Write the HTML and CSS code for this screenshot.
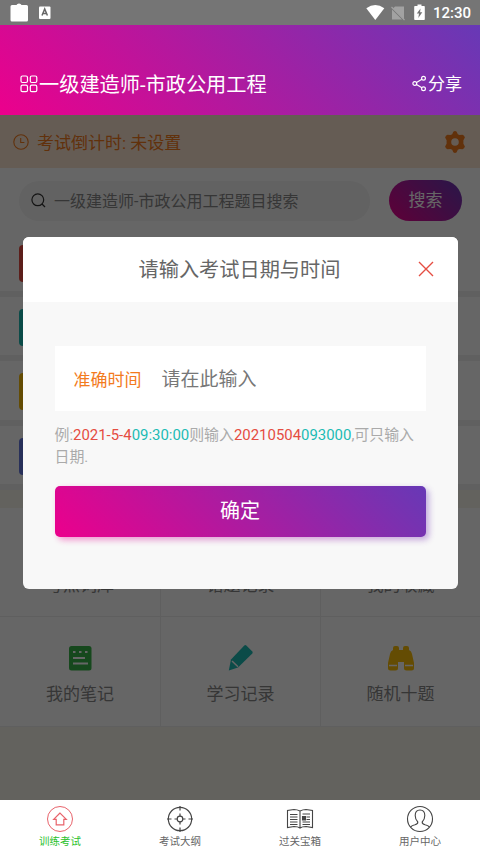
FILE: index.html
```
<!DOCTYPE html>
<html lang="zh-CN">
<head>
<meta charset="utf-8">
<title>一级建造师-市政公用工程</title>
<link rel="stylesheet" href="styles.css">
</head>
<body>
<div class="app">
  <div class="status">
    <svg class="status-left" width="60" height="25" viewBox="0 0 60 25">
      <path d="M12 5h4.500q.5-1.500 2.500-1.500t2.500 1.500H26.500q1.500 0 1.500 1.500v13.500q0 1.500-1.500 1.500H12q-1.500 0-1.500-1.500V6.500Q10.500 5 12 5z" fill="#fff"/>
      <rect x="39" y="6.500" width="11.500" height="12.500" rx="1" fill="#fff"/>
      <path d="M42 15.500l2.700-6.500 2.700 6.500M43 13.500h3.400" fill="none" stroke="#666" stroke-width="1.500"/>
    </svg>
    <svg class="status-right" width="66" height="25" viewBox="0 0 66 25">
      <path d="M0.300 8.200Q9.300 1.800 18.300 8.200L9.300 20z" fill="#fff"/>
      <path d="M29 6.500h9v12.700L27 8.500zM26 9.500l10 10H26z" fill="#a2a2a2"/>
      <path d="M25.500 7l13 13" stroke="#a2a2a2" stroke-width="1.200"/>
      <path d="M49 6h2.500V4.500h4V6H58q.8 0 .8 .8v12.400q0 .8-.8 .8h-9q-.8 0-.8-.8V6.800q0-.8 .8-.8z" fill="#fff"/>
      <path d="M54.500 8.500l-3.700 5h2.200l-.7 4.500 4-5.700h-2.200z" fill="#757575"/>
    </svg>
    <span class="clock">12:30</span>
  </div>
  <header class="header">
    <svg width="18" height="18" viewBox="0 0 18 18" fill="none" stroke="#fff" stroke-width="1.200">
      <rect x="1" y="1" width="6.500" height="6.500" rx="1.500"/><rect x="10.300" y="1" width="6.500" height="6.500" rx="1.500"/>
      <rect x="1" y="10.200" width="6.500" height="6.500" rx="1.500"/><rect x="10.300" y="10.200" width="6.500" height="6.500" rx="1.500"/>
    </svg>
    <h1 class="title">一级建造师-市政公用工程</h1>
    <svg class="share-icon" width="15" height="17" viewBox="0 0 15 17" fill="none" stroke="#fff" stroke-width="1.200">
      <circle cx="2.800" cy="8.500" r="1.900"/><circle cx="11.500" cy="3.300" r="1.900"/><circle cx="11.500" cy="13.700" r="1.900"/>
      <path d="M4.500 7.500l5.400-3.200M4.500 9.500l5.400 3.200"/>
    </svg>
    <span class="share">分享</span>
  </header>
  <main class="page">
    <div class="notice">
      <svg width="16" height="16" viewBox="0 0 16 16" fill="none" stroke="#f37b1d" stroke-width="1.100"><circle cx="8" cy="8" r="7.200"/><path d="M7.700 4v4.500h3.700"/></svg>
      <span class="notice-text">考试倒计时: 未设置</span>
      <svg width="22" height="22" viewBox="0 0 22 22"><path fill="#f37b1d" fill-rule="evenodd" d="M9.300.700Q11-.500 12.700.700L13.800 3.200 15.500 4.100 18.500 3.700Q20.400 4.200 20.900 6.500L19.400 9.300V12.700L20.900 15.500Q20.400 17.800 18.500 18.300L15.500 17.900 13.800 18.800 12.700 21.300Q11 22.500 9.300 21.300L8.200 18.800 6.500 17.900 3.500 18.300Q1.600 17.800 1.100 15.500L2.600 12.700V9.300L1.100 6.500Q1.600 4.200 3.500 3.700L6.500 4.100 8.200 3.200zM11 7.200a3.800 3.800 0 1 0 0 7.600a3.800 3.800 0 0 0 0-7.600z"/></svg>
    </div>
    <div class="search">
      <div class="search-box">
        <svg width="15" height="15" viewBox="0 0 15 15" fill="none" stroke="#333" stroke-width="1.200"><circle cx="6.800" cy="6.800" r="5.900"/><path d="M11 11l3 3"/></svg>
        <span class="search-text">一级建造师-市政公用工程题目搜索</span>
      </div>
      <div class="search-btn">搜索</div>
    </div>
    <div class="row"><i class="tile red"></i></div>
    <div class="row"><i class="tile cyan"></i></div>
    <div class="row"><i class="tile yellow"></i></div>
    <div class="row"><i class="tile indigo"></i></div>
    <div class="grid">
      <div class="cell"><span class="pic"></span><span>考点词库</span></div>
      <div class="cell"><span class="pic"></span><span>错题记录</span></div>
      <div class="cell"><span class="pic"></span><span>我的收藏</span></div>
      <div class="cell">
        <svg class="pic" viewBox="0 0 28 28"><rect x="3" y="2" width="22.500" height="24.500" rx="2.500" fill="#39b54a"/><path d="M7 8h2.500M13 8h2.500M19 8h2.500M7 14h12M7 19.500h15" stroke="#fff" stroke-width="1.800"/></svg>
        <span>我的笔记</span>
      </div>
      <div class="cell">
        <svg class="pic" viewBox="0 0 28 28"><path d="M17.300 1.500q1-.8 2 0l6 6q.8 1 0 2L11 23.500 1.800 26.500 4 15.500z" fill="#1cbbb4"/><path d="M5 17l6 5.800" stroke="#fff" stroke-width="1.500"/></svg>
        <span>学习记录</span>
      </div>
      <div class="cell">
        <svg class="pic" viewBox="0 0 28 28"><path d="M6 4q0-2 2-2h2q2 0 2 2v2h4V4q0-2 2-2h2q2 0 2 2v2q2.500 1 3 4l2 9v5q0 2.500-2.500 2.500h-5q-2.500 0-2.500-2.500v-6h-6v6q0 2.500-2.500 2.500h-5Q1 26.500 1 24v-5l2-9q.5-3 3-4z" fill="#fbbd08"/><path d="M2 21.500H10M18 21.500H26" stroke="#fff" stroke-width="1.500"/></svg>
        <span>随机十题</span>
      </div>
    </div>
    <div class="mask">
      <section class="dialog">
        <div class="dialog-head">
          <h2>请输入考试日期与时间</h2>
          <svg class="close" width="16" height="16" viewBox="0 0 16 16" stroke="#e54d42" stroke-width="1.400"><path d="M1 1l14 14M15 1L1 15"/></svg>
        </div>
        <div class="dialog-body">
          <div class="field"><label>准确时间</label><span class="placeholder">请在此输入</span></div>
          <p class="hint">例:<b class="d">2021-5-4</b><b class="t">09:30:00</b>则输入<b class="d">20210504</b><b class="t">093000</b>,可只输入日期.</p>
          <div class="ok">确定</div>
        </div>
      </section>
    </div>
  </main>
  <nav class="tabs">
    <div class="tab active">
      <svg width="28" height="28" viewBox="0 0 28 28" fill="none" stroke="#e8636b" stroke-width="1"><circle cx="14" cy="14" r="12.500"/><path d="M14 8l-6.300 6.300h2.500v5.500h7.600v-5.500h2.500z" stroke-width="1.200"/></svg>
      <span>训练考试</span>
    </div>
    <div class="tab">
      <svg width="28" height="28" viewBox="0 0 28 28" fill="none" stroke="#444" stroke-width="1.200"><circle cx="14" cy="14" r="11.700"/><circle cx="14" cy="14" r="2.800"/><path d="M14 1v4.500M14 22.500V27M1 14h4.500M22.500 14H27M14 8.500v2.700M14 16.800v2.700M8.500 14h2.700M16.800 14h2.700"/></svg>
      <span>考试大纲</span>
    </div>
    <div class="tab">
      <svg width="28" height="28" viewBox="0 0 28 28" fill="none" stroke="#444" stroke-width="1.100"><path d="M14 6Q11 4.500 8 4.500L1.500 5.500V22.500L8 21.500Q12 21.500 14 23 16 21.500 20 21.500L26.500 22.500V5.500L20 4.500Q17 4.500 14 6V23"/><path d="M4 9.500h7.500M4 12h7.500M4 14.500h7.500M4 17h7.500M4 19.500h7.500M16.500 9H24M20.500 12H24M20.500 14.500H24M16.500 17H24M16.500 19.500H24" stroke-width="1"/><path d="M16.500 11.500h3v3.500h-3z" fill="#444"/></svg>
      <span>过关宝箱</span>
    </div>
    <div class="tab">
      <svg width="28" height="28" viewBox="0 0 28 28" fill="none" stroke="#444" stroke-width="1.100"><circle cx="14" cy="14" r="12.500"/><path d="M4.500 22Q6 20.500 9 19.800 12 19 11.800 17 9.200 14.500 9.200 10.500 9.200 5 14 5t4.800 5.500Q18.800 14.500 16.200 17 16 19 19 19.800 22 20.500 23.500 22"/></svg>
      <span>用户中心</span>
    </div>
  </nav>
</div>
</body>
</html>
```
FILE: styles.css
```
* { box-sizing: border-box; }
body {
  margin: 0;
  font-family: Roboto, "Noto Sans CJK SC", sans-serif;
  color: #333;
}
.app {
  width: 480px;
  height: 854px;
  display: flex;
  flex-direction: column;
  overflow: hidden;
}
svg { display: block; flex: none; }
.status {
  height: 25px;
  flex: none;
  background: #757575;
  display: flex;
  align-items: center;
  padding-right: 9px;
}
.status-right { margin-left: auto; }
.clock {
  width: 38px;
  margin-left: 1px;
  padding-top: 2px;
  color: #fff;
  font-size: 15px;
  font-weight: 500;
  line-height: 25px;
  text-align: right;
  white-space: nowrap;
}
.header {
  height: 90px;
  flex: none;
  display: flex;
  align-items: center;
  padding: 27px 18px 0 20px;
  color: #fff;
  background: linear-gradient(45deg, #ec008c, #6739b6);
}
.title { margin: 2px 0 0 1px; font-size: 20.200px; line-height: 28px; font-weight: 400; }
.share-icon { margin-left: auto; margin-right: 1px; }
.share { font-size: 17px; line-height: 24px; }
.page {
  position: relative;
  height: 685px;
  flex: none;
  background: #f8f4ea;
}
.notice {
  height: 53px;
  display: flex;
  align-items: center;
  padding: 0 14px 0 13px;
  color: #f37b1d;
  background: #fde6d2;
  font-size: 17px;
}
.notice-text { flex: 1; margin-left: 8px; }
.search {
  height: 65px;
  display: flex;
  align-items: center;
  padding: 0 18px 0 19px;
  background: #fff;
}
.search-box {
  width: 351px;
  height: 40px;
  border-radius: 20px;
  display: flex;
  align-items: center;
  gap: 8px;
  padding: 0 12px;
  background: #f5f5f5;
  color: #888;
  font-size: 16px;
}
.search-text { margin-top: -2px; }
.search-btn {
  width: 73px;
  height: 41px;
  margin-left: auto;
  border-radius: 21px;
  background: linear-gradient(45deg, #ec008c, #6739b6);
  color: #fff;
  font-size: 17px;
  line-height: 41px;
  text-align: center;
}
.row {
  height: 64.200px;
  display: flex;
  align-items: center;
  padding: 3px 0 0 19px;
  background: #fff;
  border-bottom: 6px solid #f1f1f1;
}
.tile { width: 38px; height: 37px; border-radius: 4px; }
.red { background: #e54d42; }
.cyan { background: #1cbbb4; }
.yellow { background: #fbbd08; }
.indigo { background: #6478e0; }
.grid {
  margin-top: 18px;
  display: grid;
  grid-template-columns: 161px 160px 159px;
  grid-auto-rows: 109.700px;
  background: #fff;
}
.cell {
  display: flex;
  flex-direction: column;
  align-items: center;
  padding-top: 27px;
  gap: 10px;
  border-right: 1px solid #eee;
  border-bottom: 1px solid #eee;
  font-size: 17px;
  line-height: 25px;
  color: #888;
}
.cell:nth-child(3n) { border-right: 0; }
.pic { width: 28px; height: 28px; }
.mask {
  position: absolute;
  inset: 0;
  display: flex;
  justify-content: center;
  align-items: flex-start;
  padding-top: 122px;
  background: rgba(0, 0, 0, 0.6);
}
.dialog {
  width: 435px;
  height: 352px;
  border-radius: 6px;
  overflow: hidden;
  background: #f8f8f8;
}
.dialog-head {
  height: 65px;
  display: flex;
  align-items: center;
  padding-right: 24px;
  background: #fff;
}
.dialog-head h2 {
  flex: 1;
  margin: 0;
  padding-left: 39px;
  font-size: 20.200px;
  font-weight: 400;
  line-height: 28px;
  text-align: center;
  color: #666;
}
.close { margin-top: -1px; }
.dialog-body { padding: 44px 32px 0; }
.field {
  height: 65px;
  display: flex;
  align-items: center;
  gap: 20px;
  padding-left: 19px;
  background: #fff;
}
.field label { color: #f37b1d; font-size: 17px; }
.placeholder { margin-top: -2px; color: #777; font-size: 19px; }
.hint {
  margin: 13px 0 18px;
  font-size: 14.930px;
  line-height: 22px;
  color: #aaa;
}
.hint b { font-weight: 400; }
.hint .d { color: #e54d42; }
.hint .t { color: #1cbbb4; }
.ok {
  position: relative;
  z-index: 0;
  height: 51px;
  border-radius: 5px;
  background: linear-gradient(45deg, #ec008c, #6739b6);
  color: #fff;
  font-size: 20px;
  line-height: 51px;
  text-align: center;
}
.ok::before {
  content: "";
  position: absolute;
  z-index: -1;
  top: 3px;
  left: 3px;
  width: 100%;
  height: 100%;
  border-radius: 5px;
  background: inherit;
  filter: blur(3px);
  opacity: 0.4;
}
.tabs {
  height: 54px;
  flex: none;
  display: grid;
  grid-template-columns: repeat(4, 120px);
  background: #fff;
}
.tab {
  display: flex;
  flex-direction: column;
  align-items: center;
  padding-top: 5px;
  gap: 1px;
  font-size: 10.500px;
  line-height: 15px;
  color: #666;
}
.active { color: #2bc12b; }
```
